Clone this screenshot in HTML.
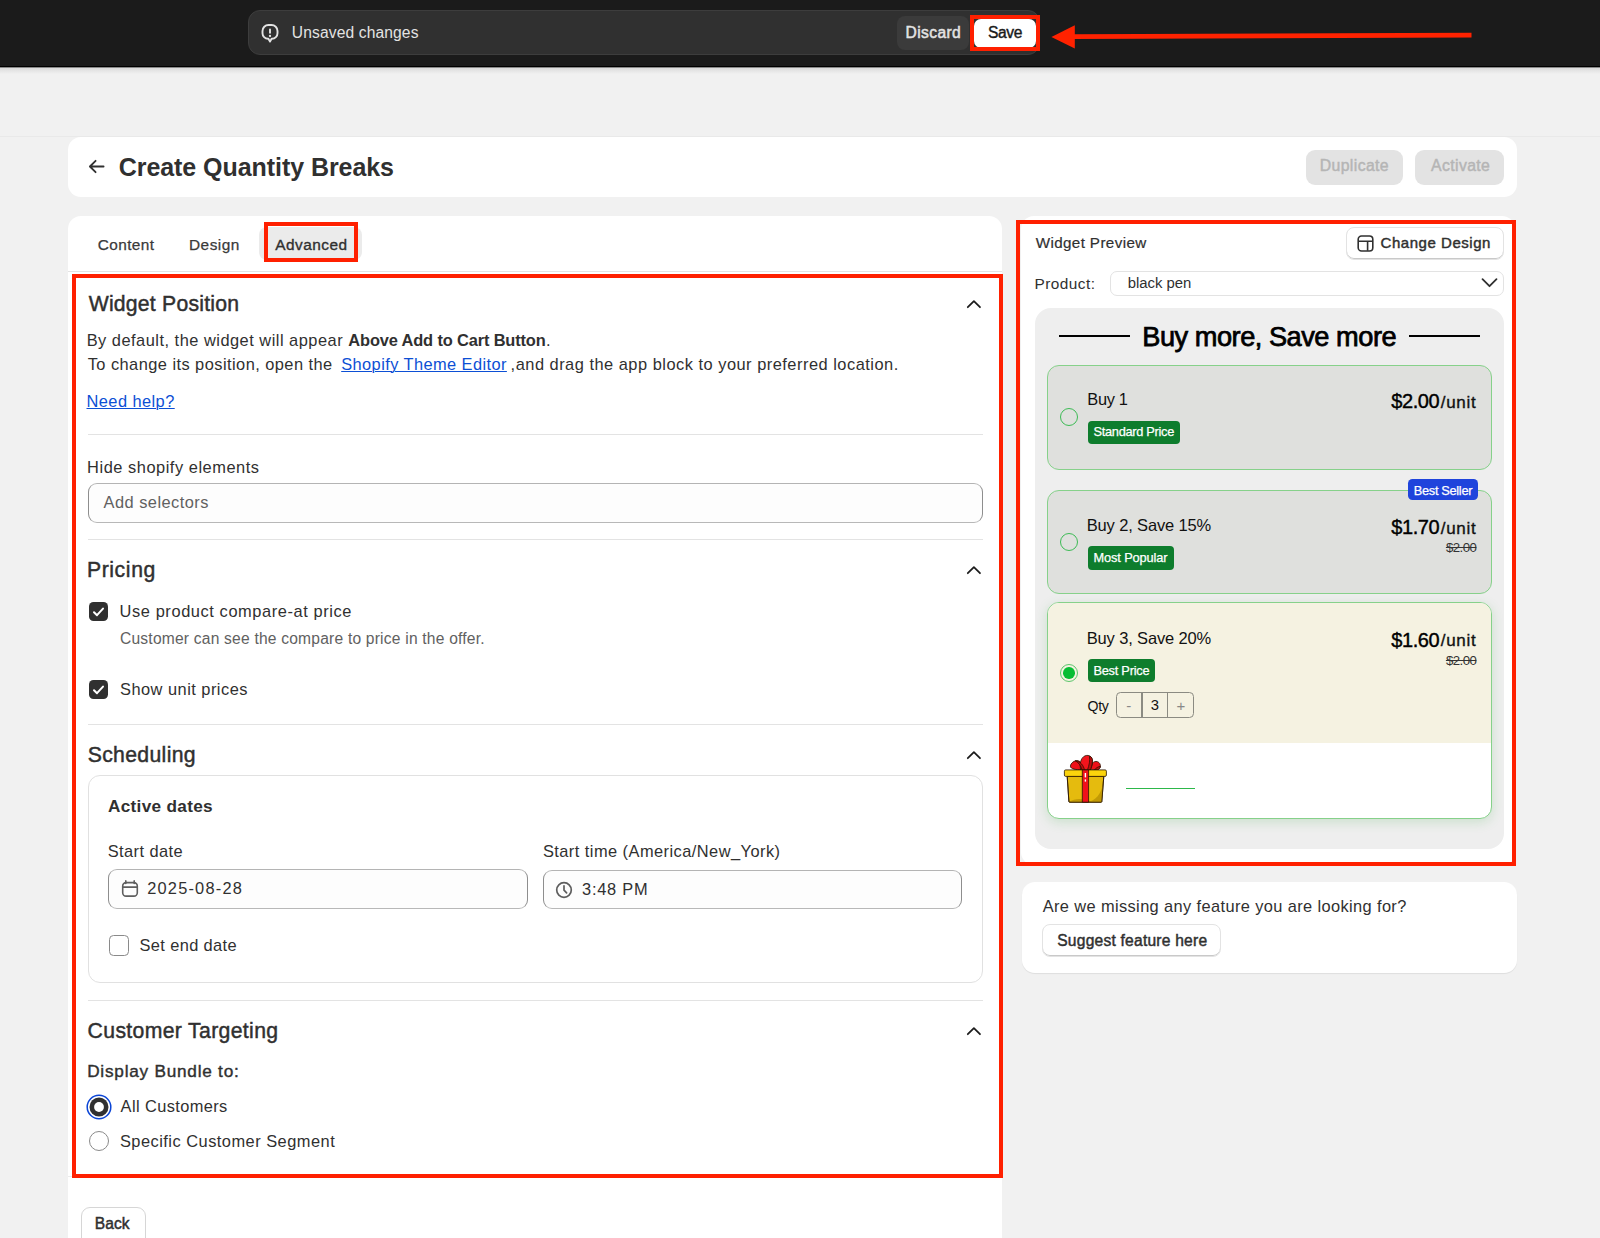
<!DOCTYPE html>
<html><head><meta charset="utf-8">
<style>
*{box-sizing:border-box;margin:0;padding:0}
html,body{width:1600px;height:1238px;overflow:hidden}
body{position:relative;background:#f1f1f1;font-family:"Liberation Sans",sans-serif;color:#303030}
.a{position:absolute}
.t{position:absolute;white-space:pre;line-height:1}
.card{position:absolute;background:#fff;border-radius:13px}
.redbox{position:absolute;border:4.5px solid #ff2000}
.hr{position:absolute;height:1px;background:#e3e3e3}
.inp{position:absolute;border:1px solid #8e8e8e;border-top-color:#b4b4b4;border-bottom-color:#b8b8b8;border-radius:9px;background:#fdfdfd}
.cbx{position:absolute;width:19px;height:19.5px;border-radius:4.5px;background:#303030}
.wc{position:absolute;border-radius:12px;border:1px solid #86d18a}
.badge{position:absolute;background:#0e7d2d;border-radius:4px}
.radio{position:absolute;width:18px;height:18px;border-radius:50%;border:1.5px solid #3dbb55}
</style></head><body>

<!-- TOP BAR -->
<div class="a" style="left:0;top:0;width:1600px;height:66px;background:#1b1b1b"></div>
<div class="a" style="left:0;top:66px;width:1600px;height:1px;background:#000"></div>
<div class="a" style="left:0;top:67px;width:1600px;height:1px;background:#8a8a8a"></div>
<div class="a" style="left:0;top:68px;width:1600px;height:6px;background:linear-gradient(#dcdcdc,#f1f1f1)"></div>
<div class="a" style="left:248px;top:10px;width:792px;height:45px;background:#303030;border-radius:12px;border:1px solid #3d3d3d"></div>
<svg class="a" style="left:259px;top:22px" width="22" height="23" viewBox="0 0 22 23">
  <path d="M9.5 3H12.5A6 6 0 0 1 18.5 9V11.3A5.5 5.5 0 0 1 13 16.8H12.6L11 19.6L9.4 16.8H9A5.5 5.5 0 0 1 3.5 11.3V9A6 6 0 0 1 9.5 3Z" fill="none" stroke="#e3e3e3" stroke-width="1.9" stroke-linejoin="round"/>
  <rect x="10.05" y="6.6" width="1.9" height="5.2" rx=".95" fill="#e3e3e3"/>
  <circle cx="11" cy="14" r="1.15" fill="#e3e3e3"/>
</svg>
<div class="a" style="left:897px;top:16px;width:72px;height:34px;background:#3b3b3b;border-radius:8px"></div>
<div class="a" style="left:974px;top:19px;width:62px;height:29px;background:#fff;border-radius:7px"></div>
<div class="redbox" style="left:970px;top:14.5px;width:70px;height:36.5px"></div>
<svg class="a" style="left:1048px;top:22px" width="430" height="28" viewBox="0 0 430 28">
  <path d="M423.5 13.2 L25 14.7" stroke="#ff2200" stroke-width="4.8"/>
  <path d="M3.4 15 L26.8 3.2 L26.8 26.6 Z" fill="#ff2200"/>
</svg>

<div class="a" style="left:0;top:136px;width:1600px;height:1px;background:#e9e9e9"></div>

<!-- HEADER CARD -->
<div class="card" style="left:68px;top:137px;width:1449px;height:60px"></div>
<svg class="a" style="left:88px;top:159px" width="17" height="15" viewBox="0 0 17 15">
  <path d="M15.6 7.5H2.4M7.6 1.8 1.9 7.5l5.7 5.7" fill="none" stroke="#303030" stroke-width="1.8" stroke-linecap="round" stroke-linejoin="round"/>
</svg>
<div class="a" style="left:1306px;top:149.5px;width:97px;height:35px;background:#e3e3e3;border-radius:9px"></div>
<div class="a" style="left:1415px;top:149.5px;width:89px;height:35px;background:#e3e3e3;border-radius:9px"></div>

<!-- LEFT CARD -->
<div class="card" style="left:68px;top:216px;width:934px;height:1040px"></div>
<div class="a" style="left:259px;top:227px;width:103px;height:33px;background:#ebebeb;border-radius:8px"></div>
<div class="hr" style="left:68px;top:270.5px;width:934px"></div>
<!-- chevrons -->
<svg class="a" style="left:965px;top:297px" width="18" height="13" viewBox="0 0 18 13"><path d="M2.8 10.2 8.9 4.1l6.1 6.1" fill="none" stroke="#1c1c1c" stroke-width="1.75" stroke-linecap="round" stroke-linejoin="round"/></svg>
<svg class="a" style="left:965px;top:563px" width="18" height="13" viewBox="0 0 18 13"><path d="M2.8 10.2 8.9 4.1l6.1 6.1" fill="none" stroke="#1c1c1c" stroke-width="1.75" stroke-linecap="round" stroke-linejoin="round"/></svg>
<svg class="a" style="left:965px;top:748px" width="18" height="13" viewBox="0 0 18 13"><path d="M2.8 10.2 8.9 4.1l6.1 6.1" fill="none" stroke="#1c1c1c" stroke-width="1.75" stroke-linecap="round" stroke-linejoin="round"/></svg>
<svg class="a" style="left:965px;top:1024px" width="18" height="13" viewBox="0 0 18 13"><path d="M2.8 10.2 8.9 4.1l6.1 6.1" fill="none" stroke="#1c1c1c" stroke-width="1.75" stroke-linecap="round" stroke-linejoin="round"/></svg>

<div class="hr" style="left:88px;top:434px;width:895px"></div>
<div class="inp" style="left:88px;top:483px;width:895px;height:39.5px"></div>
<div class="hr" style="left:88px;top:539px;width:895px"></div>

<div class="cbx" style="left:89.2px;top:601.8px"></div>
<svg class="a" style="left:89.2px;top:601.8px" width="19" height="19.5" viewBox="0 0 19 19.5"><path d="M5 10.2l3 3 6-6.6" fill="none" stroke="#fff" stroke-width="2" stroke-linecap="round" stroke-linejoin="round"/></svg>
<div class="cbx" style="left:89.2px;top:679.8px"></div>
<svg class="a" style="left:89.2px;top:679.8px" width="19" height="19.5" viewBox="0 0 19 19.5"><path d="M5 10.2l3 3 6-6.6" fill="none" stroke="#fff" stroke-width="2" stroke-linecap="round" stroke-linejoin="round"/></svg>
<div class="hr" style="left:88px;top:724px;width:895px"></div>

<div class="a" style="left:88.4px;top:775px;width:894.5px;height:208px;border:1px solid #e1e1e1;border-radius:12px"></div>
<div class="inp" style="left:107.75px;top:869.4px;width:419.8px;height:39.2px"></div>
<svg class="a" style="left:120px;top:879px" width="20" height="20" viewBox="0 0 20 20">
  <rect x="2.7" y="3.6" width="14.6" height="13.5" rx="3.4" fill="none" stroke="#5e5e5e" stroke-width="1.6"/>
  <path d="M2.9 8.1h14.2M5.8 1.9v2.6M14.2 1.9v2.6" stroke="#5e5e5e" stroke-width="1.6" stroke-linecap="round"/>
</svg>
<div class="inp" style="left:543.3px;top:869.6px;width:419px;height:39px"></div>
<svg class="a" style="left:554px;top:879.5px" width="20" height="20" viewBox="0 0 20 20">
  <circle cx="10" cy="10" r="7.3" fill="none" stroke="#5e5e5e" stroke-width="1.7"/>
  <path d="M10 5.8v4.4l2.6 2.6" fill="none" stroke="#5e5e5e" stroke-width="1.7" stroke-linecap="round"/>
</svg>
<div class="a" style="left:108.5px;top:935px;width:20.5px;height:21px;border:1px solid #8a8a8a;border-radius:4.5px;background:#fff"></div>
<div class="hr" style="left:88px;top:1000px;width:895px"></div>

<!-- radios -->
<svg class="a" style="left:84.8px;top:1092.6px" width="28" height="28" viewBox="0 0 28 28">
  <circle cx="14" cy="14" r="11.8" fill="none" stroke="#0b45d6" stroke-width="1.5"/>
  <circle cx="14" cy="14" r="9.5" fill="#303030"/>
  <circle cx="14" cy="14" r="4.9" fill="#fff"/>
</svg>
<div class="a" style="left:89.1px;top:1131.3px;width:20px;height:20px;border-radius:50%;border:1px solid #8a8a8a;background:#fff"></div>

<div class="hr" style="left:68px;top:1176px;width:934px;background:#ebebeb"></div>
<div class="a" style="left:81px;top:1206.5px;width:64.5px;height:40px;border:1px solid #d6d6d6;border-radius:9px;background:#fff"></div>

<!-- RIGHT CARD -->
<div class="card" style="left:1021px;top:216px;width:494px;height:649px"></div>
<div class="a" style="left:1346px;top:227px;width:157.75px;height:33px;border:1px solid #e3e3e3;border-radius:8px;background:#fff;box-shadow:inset 0 -1px 0 #c9c9c9"></div>
<svg class="a" style="left:1356px;top:234px" width="19" height="19" viewBox="0 0 19 19">
  <rect x="2.2" y="2" width="14.6" height="15" rx="3.3" fill="none" stroke="#303030" stroke-width="1.6"/>
  <path d="M2.4 7.2h14.2M11.6 7.4v9.4" stroke="#303030" stroke-width="1.6"/>
</svg>
<div class="a" style="left:1110.4px;top:271.25px;width:393.35px;height:24.5px;border:1px solid #e3e3e3;border-radius:7px;background:#fff"></div>
<svg class="a" style="left:1480px;top:276px" width="19" height="14" viewBox="0 0 19 14"><path d="M2.5 3.2l7 7 7-7" fill="none" stroke="#303030" stroke-width="1.8" stroke-linecap="round" stroke-linejoin="round"/></svg>

<div class="a" style="left:1035px;top:308px;width:468.8px;height:541px;border-radius:16px;background:#eeeeee"></div>
<div class="a" style="left:1059px;top:334.8px;width:71px;height:2.6px;background:#000"></div>
<div class="a" style="left:1408.6px;top:334.8px;width:71.7px;height:2.6px;background:#000"></div>

<div class="wc" style="left:1047px;top:365px;width:445px;height:104.5px;background:#dfe0dd"></div>
<div class="radio" style="left:1059.7px;top:407.8px"></div>
<div class="badge" style="left:1087.9px;top:420.9px;width:92.25px;height:23px"></div>

<div class="wc" style="left:1047px;top:490px;width:445px;height:104.3px;background:#dfe0dd"></div>
<div class="radio" style="left:1059.7px;top:533px"></div>
<div class="badge" style="left:1087.9px;top:546px;width:86.1px;height:23.5px"></div>
<div class="a" style="left:1408px;top:479.4px;width:70px;height:20.8px;border-radius:4.5px;background:#1f44dc"></div>

<div class="wc" style="left:1047px;top:602px;width:445px;height:216.5px;background:#fff;overflow:hidden;box-shadow:0 3px 12px rgba(60,170,70,.2)">
  <div style="position:absolute;left:0;top:0;width:100%;height:140px;background:#f5f2e1"></div>
</div>
<div class="a" style="left:1059.8px;top:664px;width:18px;height:18px;border-radius:50%;border:1.5px solid #5cc66c;background:transparent"></div>
<div class="a" style="left:1063px;top:667.2px;width:11.6px;height:11.6px;border-radius:50%;background:#06bd33"></div>
<div class="badge" style="left:1087.9px;top:659.1px;width:67.1px;height:22.8px"></div>
<div class="a" style="left:1115.6px;top:692.1px;width:78.8px;height:25.5px;border:1.3px solid #8b8b82;border-radius:4.5px"></div>
<div class="a" style="left:1141.3px;top:692.1px;width:1.3px;height:25.5px;background:#8b8b82"></div>
<div class="a" style="left:1167.2px;top:692.1px;width:1.3px;height:25.5px;background:#8b8b82"></div>

<!-- gift -->
<svg class="a" style="left:1062px;top:753px" width="47" height="51" viewBox="0 0 47 51">
  <g stroke="#2a1400" stroke-width="0.8" stroke-linejoin="round">
    <path d="M21 17 C 17 17, 10 16.5, 8.6 14.2 C 7.6 11.5, 11 7.8, 15 7.6 C 18 7.6, 21 11, 22.5 17 Z" fill="#ee1018"/>
    <path d="M26 17 C 28 12, 31 8.5, 34 8.4 C 37.5 8.6, 39 11.8, 38.2 14.6 C 37.5 16.4, 33 17, 26 17 Z" fill="#ee1018"/>
    <path d="M38.4 13.2 C 36 13.8, 33.6 15.2, 32.4 17 L 35.6 17 C 36.8 16.4, 38 15.2, 38.4 13.2Z" fill="#c00a0e"/>
    <path d="M18.6 17 C 17.2 9, 19.6 3, 24.8 2.4 C 28.4 2.2, 30.4 4.6, 30.4 8.5 C 30.4 12, 29.2 15, 28.2 17 Z" fill="#f2141c"/>
    <path d="M27.4 3.2 C 29.6 3.6, 30.6 5.5, 30.4 8.5 C 30.2 12, 29.2 15, 28.2 17 L 25.4 17 C 27.2 12.5, 28.2 7, 27.4 3.2Z" fill="#c00a0e"/>
    <path d="M13.2 7.7 C 16.6 9.4, 19 13, 20 17 L 22.6 17 C 21.4 12.4, 18.6 8.4, 13.2 7.7Z" fill="#c00a0e"/>
    <path d="M5.2 23.4 L41.8 23.4 L39.8 48.6 Q39.7 49.2 39.1 49.2 L7.6 49.2 Q7 49.2 6.9 48.6 Z" fill="#e5bb0e"/>
    <path d="M25 49.2 C 33 48, 40 41, 41.3 29 L 39.8 48.6 Q39.7 49.2 39.1 49.2 Z" fill="#c29a05" stroke="none"/>
    <path d="M7 49 C 10.5 46.2, 16.5 45.4, 20.3 46.2 L 20.3 49.2 L 7.6 49.2 Z" fill="#c29a05" stroke="none"/>
    <path d="M5.2 23.4 L41.8 23.4 L39.8 48.6 Q39.7 49.2 39.1 49.2 L7.6 49.2 Q7 49.2 6.9 48.6 Z" fill="none"/>
    <rect x="2.4" y="16.9" width="42" height="6.5" rx="1.3" fill="#fbd40c"/>
    <rect x="20.3" y="16.9" width="6.3" height="32.3" fill="#f0101a"/>
  </g>
  <rect x="22.7" y="20" width="1.4" height="4.4" fill="#fff"/>
  <rect x="22.7" y="26.4" width="1.4" height="2.2" fill="#fff"/>
</svg>
<div class="a" style="left:1126px;top:787.6px;width:69px;height:1.6px;background:#2db84a"></div>

<!-- SUGGEST CARD -->
<div class="card" style="left:1022px;top:882px;width:495.3px;height:90.5px;box-shadow:0 1px 1px rgba(0,0,0,.08)"></div>
<div class="a" style="left:1042.2px;top:923.7px;width:179.2px;height:33.8px;border:1px solid #e3e3e3;border-radius:8px;background:#fff;box-shadow:inset 0 -1px 0 #c9c9c9"></div>

<div class="t" style="left:291.80px;top:24.54px;font-size:15.6px;color:#e3e3e3;letter-spacing:0.130px;">Unsaved changes</div>
<div class="t" style="left:905.55px;top:24.74px;font-size:15.6px;color:#e3e3e3;-webkit-text-stroke:0.5px #e3e3e3;letter-spacing:0.383px;">Discard</div>
<div class="t" style="left:988.00px;top:24.74px;font-size:15.6px;color:#1a1a1a;-webkit-text-stroke:0.4px #1a1a1a;letter-spacing:-0.360px;">Save</div>
<div class="t" style="left:118.75px;top:154.75px;font-size:25px;color:#303030;font-weight:bold;letter-spacing:-0.059px;">Create Quantity Breaks</div>
<div class="t" style="left:1319.72px;top:158.27px;font-size:15.8px;color:#b5b5b5;-webkit-text-stroke:0.45px #b5b5b5;letter-spacing:0.383px;">Duplicate</div>
<div class="t" style="left:1431.12px;top:158.27px;font-size:15.8px;color:#b5b5b5;-webkit-text-stroke:0.45px #b5b5b5;letter-spacing:0.362px;">Activate</div>
<div class="t" style="left:97.83px;top:236.51px;font-size:15.4px;color:#3a3a3a;-webkit-text-stroke:0.25px #3a3a3a;letter-spacing:0.365px;">Content</div>
<div class="t" style="left:188.93px;top:236.51px;font-size:15.4px;color:#3a3a3a;-webkit-text-stroke:0.25px #3a3a3a;letter-spacing:0.516px;">Design</div>
<div class="t" style="left:275.18px;top:236.51px;font-size:15.4px;color:#303030;-webkit-text-stroke:0.35px #303030;letter-spacing:0.503px;">Advanced</div>
<div class="t" style="left:88.72px;top:293.23px;font-size:21.2px;color:#303030;-webkit-text-stroke:0.45px #303030;letter-spacing:0.218px;">Widget Position</div>
<div class="t" style="left:86.70px;top:332.31px;font-size:16.4px;color:#303030;letter-spacing:0.494px;">By default, the widget will appear</div>
<div class="t" style="left:348.35px;top:332.31px;font-size:16.4px;color:#303030;font-weight:bold;letter-spacing:-0.140px;">Above Add to Cart Button</div>
<div class="t" style="left:546.10px;top:332.31px;font-size:16.4px;color:#303030;">.</div>
<div class="t" style="left:87.70px;top:356.06px;font-size:16.4px;color:#303030;letter-spacing:0.450px;">To change its position, open the</div>
<div class="t" style="left:341.20px;top:356.06px;font-size:16.4px;color:#0c4fd5;letter-spacing:0.419px;text-decoration:underline;text-underline-offset:1px;text-decoration-thickness:1px">Shopify Theme Editor</div>
<div class="t" style="left:510.60px;top:356.06px;font-size:16.4px;color:#303030;letter-spacing:0.500px;">,and drag the app block to your preferred location.</div>
<div class="t" style="left:86.50px;top:392.96px;font-size:16.4px;color:#0c4fd5;letter-spacing:0.437px;text-decoration:underline;text-underline-offset:1px;text-decoration-thickness:1px">Need help?</div>
<div class="t" style="left:87.10px;top:459.46px;font-size:16.4px;color:#303030;letter-spacing:0.533px;">Hide shopify elements</div>
<div class="t" style="left:103.60px;top:493.66px;font-size:16.4px;color:#616161;letter-spacing:0.462px;">Add selectors</div>
<div class="t" style="left:86.92px;top:558.98px;font-size:21.2px;color:#303030;-webkit-text-stroke:0.45px #303030;letter-spacing:0.607px;">Pricing</div>
<div class="t" style="left:119.60px;top:603.06px;font-size:16.4px;color:#303030;letter-spacing:0.592px;">Use product compare-at price</div>
<div class="t" style="left:120.00px;top:630.74px;font-size:15.6px;color:#616161;letter-spacing:0.207px;">Customer can see the compare to price in the offer.</div>
<div class="t" style="left:120.00px;top:681.06px;font-size:16.4px;color:#303030;letter-spacing:0.478px;">Show unit prices</div>
<div class="t" style="left:87.72px;top:743.98px;font-size:21.2px;color:#303030;-webkit-text-stroke:0.45px #303030;letter-spacing:0.338px;">Scheduling</div>
<div class="t" style="left:108.00px;top:797.98px;font-size:17.2px;color:#303030;font-weight:bold;letter-spacing:0.303px;">Active dates</div>
<div class="t" style="left:107.70px;top:843.46px;font-size:16.4px;color:#303030;letter-spacing:0.435px;">Start date</div>
<div class="t" style="left:542.90px;top:843.26px;font-size:16.4px;color:#303030;letter-spacing:0.456px;">Start time (America/New_York)</div>
<div class="t" style="left:147.20px;top:880.46px;font-size:16.4px;color:#303030;letter-spacing:1.198px;">2025-08-28</div>
<div class="t" style="left:582.10px;top:880.56px;font-size:16.4px;color:#303030;letter-spacing:0.748px;">3:48 PM</div>
<div class="t" style="left:139.55px;top:937.06px;font-size:16.4px;color:#303030;letter-spacing:0.369px;">Set end date</div>
<div class="t" style="left:87.62px;top:1019.68px;font-size:21.2px;color:#303030;-webkit-text-stroke:0.45px #303030;letter-spacing:0.350px;">Customer Targeting</div>
<div class="t" style="left:87.20px;top:1063.38px;font-size:17.2px;color:#303030;-webkit-text-stroke:0.4px #303030;letter-spacing:0.767px;">Display Bundle to:</div>
<div class="t" style="left:120.60px;top:1097.66px;font-size:16.4px;color:#303030;letter-spacing:0.386px;">All Customers</div>
<div class="t" style="left:119.90px;top:1133.06px;font-size:16.4px;color:#303030;letter-spacing:0.487px;">Specific Customer Segment</div>
<div class="t" style="left:94.82px;top:1215.54px;font-size:15.6px;color:#303030;-webkit-text-stroke:0.45px #303030;letter-spacing:0.056px;">Back</div>
<div class="t" style="left:1035.70px;top:235.48px;font-size:15.2px;color:#303030;-webkit-text-stroke:0.2px #303030;letter-spacing:0.384px;">Widget Preview</div>
<div class="t" style="left:1380.52px;top:235.25px;font-size:15px;color:#303030;-webkit-text-stroke:0.45px #303030;letter-spacing:0.545px;">Change Design</div>
<div class="t" style="left:1034.40px;top:275.51px;font-size:15.4px;color:#303030;letter-spacing:0.482px;">Product:</div>
<div class="t" style="left:1127.85px;top:275.94px;font-size:14.9px;color:#303030;letter-spacing:-0.043px;">black pen</div>
<div class="t" style="left:1142.25px;top:322.88px;font-size:27.2px;color:#000;-webkit-text-stroke:0.75px #000;letter-spacing:-0.475px;">Buy more, Save more</div>
<div class="t" style="left:1087.30px;top:391.31px;font-size:16.4px;color:#111;letter-spacing:-0.354px;">Buy 1</div>
<div class="t" style="left:1093.53px;top:426.12px;font-size:12.8px;color:#fff;-webkit-text-stroke:0.25px #fff;letter-spacing:-0.300px;">Standard Price</div>
<div class="t" style="left:1391.30px;top:391.40px;font-size:20px;color:#000;-webkit-text-stroke:0.4px #000;letter-spacing:-0.431px;">$2.00</div>
<div class="t" style="left:1440.67px;top:393.95px;font-size:17px;color:#111;-webkit-text-stroke:0.35px #111;letter-spacing:0.760px;">/unit</div>
<div class="t" style="left:1413.83px;top:484.52px;font-size:12.8px;color:#fff;-webkit-text-stroke:0.25px #fff;letter-spacing:-0.328px;">Best Seller</div>
<div class="t" style="left:1086.70px;top:516.98px;font-size:16.5px;color:#111;letter-spacing:-0.143px;">Buy 2, Save 15%</div>
<div class="t" style="left:1093.38px;top:551.52px;font-size:12.8px;color:#fff;-webkit-text-stroke:0.25px #fff;letter-spacing:-0.105px;">Most Popular</div>
<div class="t" style="left:1391.30px;top:517.00px;font-size:20px;color:#000;-webkit-text-stroke:0.4px #000;letter-spacing:-0.431px;">$1.70</div>
<div class="t" style="left:1440.67px;top:519.55px;font-size:17px;color:#111;-webkit-text-stroke:0.35px #111;letter-spacing:0.760px;">/unit</div>
<div class="t" style="left:1445.90px;top:540.80px;font-size:13.3px;color:#333;letter-spacing:-0.571px;text-decoration:line-through">$2.00</div>
<div class="t" style="left:1086.70px;top:630.08px;font-size:16.5px;color:#111;letter-spacing:-0.143px;">Buy 3, Save 20%</div>
<div class="t" style="left:1093.38px;top:664.72px;font-size:12.8px;color:#fff;-webkit-text-stroke:0.25px #fff;letter-spacing:-0.235px;">Best Price</div>
<div class="t" style="left:1391.30px;top:629.80px;font-size:20px;color:#000;-webkit-text-stroke:0.4px #000;letter-spacing:-0.431px;">$1.60</div>
<div class="t" style="left:1440.67px;top:632.35px;font-size:17px;color:#111;-webkit-text-stroke:0.35px #111;letter-spacing:0.760px;">/unit</div>
<div class="t" style="left:1445.90px;top:654.20px;font-size:13.3px;color:#333;letter-spacing:-0.571px;text-decoration:line-through">$2.00</div>
<div class="t" style="left:1087.50px;top:698.51px;font-size:14.1px;color:#111;letter-spacing:-0.292px;">Qty</div>
<div class="t" style="left:1126.30px;top:697.85px;font-size:15px;color:#888;">-</div>
<div class="t" style="left:1150.80px;top:698.12px;font-size:14.8px;color:#111;">3</div>
<div class="t" style="left:1176.40px;top:697.85px;font-size:15px;color:#888;">+</div>
<div class="t" style="left:1042.70px;top:898.26px;font-size:16.4px;color:#303030;letter-spacing:0.379px;">Are we missing any feature you are looking for?</div>
<div class="t" style="left:1057.22px;top:932.54px;font-size:15.6px;color:#303030;-webkit-text-stroke:0.45px #303030;letter-spacing:0.222px;">Suggest feature here</div>

<!-- RED BOXES -->
<div class="redbox" style="left:264px;top:222px;width:94px;height:39.5px"></div>
<div class="redbox" style="left:72px;top:274px;width:931px;height:904px"></div>
<div class="redbox" style="left:1016px;top:220px;width:499.5px;height:645.5px"></div>

</body></html>
